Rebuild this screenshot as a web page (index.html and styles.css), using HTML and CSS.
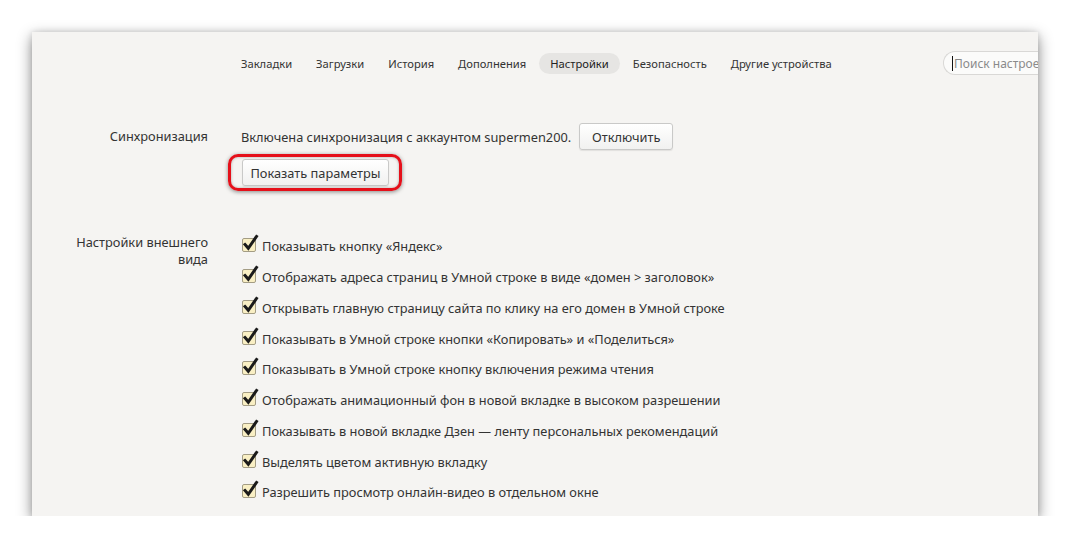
FILE: index.html
```html
<!DOCTYPE html>
<html lang="ru">
<head>
<meta charset="utf-8">
<title>Настройки</title>
<link rel="stylesheet" href="styles.css">
</head>
<body>
<div class="card">
  <nav class="nav">
    <a class="nav-item">Закладки</a>
    <a class="nav-item">Загрузки</a>
    <a class="nav-item">История</a>
    <a class="nav-item">Дополнения</a>
    <a class="nav-item active">Настройки</a>
    <a class="nav-item">Безопасность</a>
    <a class="nav-item">Другие устройства</a>
    <div class="search"><span class="caret"></span><span class="placeholder">Поиск настроек</span></div>
  </nav>

  <section class="row sync">
    <div class="label">Синхронизация</div>
    <div class="content">
      <div class="sync-line">
        <span>Включена синхронизация с аккаунтом supermen200.</span>
        <button class="btn btn-off">Отключить</button>
      </div>
      <button class="btn btn-params highlighted">Показать параметры</button>
    </div>
  </section>

  <section class="row look">
    <div class="label">Настройки внешнего вида</div>
    <ul class="checks">
      <li><svg class="cb" viewBox="0 0 17 18" width="17" height="18"><rect x="0.5" y="4.5" width="13" height="13" rx="1.5" class="box"/><path d="M3 10.5 L6.3 14.3 L14.5 2.5" class="tick"/></svg><span>Показывать кнопку «Яндекс»</span></li>
      <li><svg class="cb" viewBox="0 0 17 18" width="17" height="18"><rect x="0.5" y="4.5" width="13" height="13" rx="1.5" class="box"/><path d="M3 10.5 L6.3 14.3 L14.5 2.5" class="tick"/></svg><span>Отображать адреса страниц в Умной строке в виде «домен &gt; заголовок»</span></li>
      <li><svg class="cb" viewBox="0 0 17 18" width="17" height="18"><rect x="0.5" y="4.5" width="13" height="13" rx="1.5" class="box"/><path d="M3 10.5 L6.3 14.3 L14.5 2.5" class="tick"/></svg><span>Открывать главную страницу сайта по клику на его домен в Умной строке</span></li>
      <li><svg class="cb" viewBox="0 0 17 18" width="17" height="18"><rect x="0.5" y="4.5" width="13" height="13" rx="1.5" class="box"/><path d="M3 10.5 L6.3 14.3 L14.5 2.5" class="tick"/></svg><span>Показывать в Умной строке кнопки «Копировать» и «Поделиться»</span></li>
      <li><svg class="cb" viewBox="0 0 17 18" width="17" height="18"><rect x="0.5" y="4.5" width="13" height="13" rx="1.5" class="box"/><path d="M3 10.5 L6.3 14.3 L14.5 2.5" class="tick"/></svg><span>Показывать в Умной строке кнопку включения режима чтения</span></li>
      <li><svg class="cb" viewBox="0 0 17 18" width="17" height="18"><rect x="0.5" y="4.5" width="13" height="13" rx="1.5" class="box"/><path d="M3 10.5 L6.3 14.3 L14.5 2.5" class="tick"/></svg><span>Отображать анимационный фон в новой вкладке в высоком разрешении</span></li>
      <li><svg class="cb" viewBox="0 0 17 18" width="17" height="18"><rect x="0.5" y="4.5" width="13" height="13" rx="1.5" class="box"/><path d="M3 10.5 L6.3 14.3 L14.5 2.5" class="tick"/></svg><span>Показывать в новой вкладке Дзен — ленту персональных рекомендаций</span></li>
      <li><svg class="cb" viewBox="0 0 17 18" width="17" height="18"><rect x="0.5" y="4.5" width="13" height="13" rx="1.5" class="box"/><path d="M3 10.5 L6.3 14.3 L14.5 2.5" class="tick"/></svg><span>Выделять цветом активную вкладку</span></li>
      <li><svg class="cb" viewBox="0 0 17 18" width="17" height="18"><rect x="0.5" y="4.5" width="13" height="13" rx="1.5" class="box"/><path d="M3 10.5 L6.3 14.3 L14.5 2.5" class="tick"/></svg><span>Разрешить просмотр онлайн-видео в отдельном окне</span></li>
    </ul>
  </section>
</div>
</body>
</html>
```

FILE: styles.css
```css
html, body {
  margin: 0;
  padding: 0;
  background: #ffffff;
}

body {
  font-family: "Noto Sans", "Open Sans", sans-serif;
  font-size: 12.8px;
  color: #333;
}

.card {
  margin: 32px 0 0 32px;
  width: 1006px;
  height: 484px;
  background: #f5f4f2;
  box-shadow: 0 5px 14px rgba(0, 0, 0, 0.45), 0 0 6px rgba(0, 0, 0, 0.12);
  overflow: hidden;
}

.nav {
  display: flex;
  align-items: center;
  gap: 2px;
  padding: 19px 0 0 198px;
  height: 24px;
  font-size: 11.2px;
}

.nav-item {
  display: block;
  padding: 0 11px;
  height: 21px;
  line-height: 21px;
  border-radius: 11px;
  color: #333;
  white-space: nowrap;
}

.nav-item.active {
  background: #e6e5e3;
  color: #222;
}

.search {
  margin-left: auto;
  width: 95px;
  height: 24px;
  box-sizing: border-box;
  border: 1px solid #d9d8d6;
  border-right: none;
  border-radius: 12px 0 0 12px;
  background: #fbfbfa;
  display: flex;
  align-items: center;
  padding-left: 8px;
  gap: 1px;
  white-space: nowrap;
  overflow: hidden;
}

.caret {
  width: 1px;
  height: 15px;
  background: #111;
  flex: none;
}

.placeholder {
  color: #8a8a8a;
  font-size: 12px;
}

.row {
  display: grid;
  grid-template-columns: 176px 1fr;
  column-gap: 33px;
}

.label {
  text-align: right;
  color: #333;
  line-height: 17px;
}

.sync {
  margin-top: 48px;
}

.sync .label {
  padding-top: 5px;
}

.content {
  display: flex;
  flex-direction: column;
  align-items: flex-start;
}

.sync-line {
  display: flex;
  align-items: center;
  gap: 8px;
}

.btn {
  font: inherit;
  color: #333;
  background: linear-gradient(#ffffff, #f1f1f0);
  border: 1px solid #c9c9c8;
  border-radius: 3px;
  box-shadow: 0 1px 1px rgba(0, 0, 0, 0.08);
  height: 27px;
  padding: 0;
  white-space: nowrap;
  cursor: pointer;
}

.btn-off {
  width: 94px;
}

.btn-params {
  margin: 9px 0 0 1px;
  width: 147px;
}

.highlighted {
  position: relative;
}

.highlighted::after {
  content: "";
  position: absolute;
  left: -15px;
  right: -14px;
  top: -6px;
  bottom: -6px;
  border: 3px solid #e5101a;
  border-radius: 10px;
  box-shadow: 0 1px 4px rgba(0, 0, 0, 0.45), inset 0 0 3px rgba(0, 0, 0, 0.3);
  pointer-events: none;
}

.look {
  margin-top: 45px;
}

.look .label {
  padding: 3px 0 0 38px;
}

.checks {
  list-style: none;
  margin: 0;
  padding: 0;
}

.checks li {
  height: 30.75px;
  display: flex;
  align-items: center;
  gap: 3px;
  white-space: nowrap;
}

.cb {
  flex: none;
  margin: -6px 0 0 1px;
}

.cb .box {
  fill: #f9efc4;
  stroke: #a39c84;
  stroke-width: 1;
}

.cb .tick {
  fill: none;
  stroke: #1a1a1a;
  stroke-width: 3;
  stroke-linecap: square;
  stroke-linejoin: miter;
}
```
